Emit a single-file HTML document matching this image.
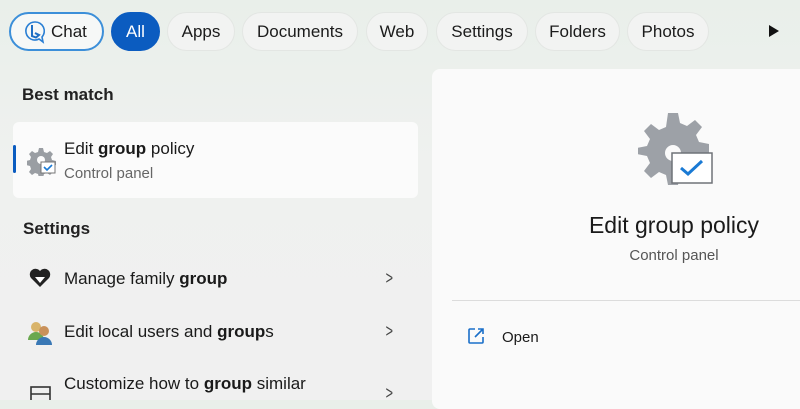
<!DOCTYPE html>
<html><head><meta charset="utf-8"><style>
*{margin:0;padding:0;box-sizing:border-box}
body{width:800px;height:400px;overflow:hidden;font-family:"Segoe UI","Liberation Sans",sans-serif;background:linear-gradient(180deg,#e9efea 0%,#eff1ef 40%,#f0f0f0 100%);position:relative;color:#1a1a1a}
.pill{position:absolute;top:12px;height:39px;border-radius:20px;background:#f2f3f2;border:1px solid #e3e6e3;font-size:17px;display:flex;align-items:center;justify-content:center;color:#1b1b1b}
.abs{position:absolute}
.chev{position:absolute;left:384px;font-size:18px;color:#444;transform:scaleX(.7)}
.t{font-size:17px}
</style></head><body>
<div class="pill" style="left:9px;width:95px;border:2.5px solid #3c8fd9;background:#f6f8f7;justify-content:flex-start;padding-left:13px">
<svg width="22" height="24" viewBox="0 0 22 24"><path d="M11 2a9 9 0 1 0 4 17l4 3-1-5A9 9 0 0 0 11 2z" fill="none" stroke="#2a7fd4" stroke-width="1.6"/><path d="M8 5v11l4 1.5 3-2.5-4-2" fill="none" stroke="#1f6fc4" stroke-width="2"/></svg>
<span style="margin-left:5px">Chat</span></div>
<div class="pill" style="left:111px;width:49px;background:#0b5cc0;border-color:#0b5cc0;color:#fff">All</div>
<div class="pill" style="left:167px;width:68px">Apps</div>
<div class="pill" style="left:242px;width:116px">Documents</div>
<div class="pill" style="left:366px;width:62px">Web</div>
<div class="pill" style="left:436px;width:92px">Settings</div>
<div class="pill" style="left:535px;width:85px">Folders</div>
<div class="pill" style="left:627px;width:82px">Photos</div>
<svg class="abs" style="left:768px;top:24px" width="12" height="14" viewBox="0 0 12 14"><path d="M1 1l10 6-10 6z" fill="#111"/></svg>

<div class="abs t" style="left:22px;top:85px;font-weight:bold;color:#222">Best match</div>
<div class="abs" style="left:13px;top:122px;width:405px;height:76px;background:#fbfbfb;border-radius:6px"></div>
<div class="abs" style="left:13px;top:145px;width:3px;height:28px;background:#0b5cc0;border-radius:2px"></div>
<svg class="abs" style="left:27px;top:146px" width="30" height="30" viewBox="0 0 30 30"><path d="M12 2h4l1 4 3 1 3-2 3 3-2 3 1 3 4 1v4l-4 1-1 3 2 3-3 3-3-2-3 1-1 4h-4l-1-4-3-1-3 2-3-3 2-3-1-3-4-1v-4l4-1 1-3-2-3 3-3 3 2 3-1z" fill="#9a9ea3"/><circle cx="14" cy="14" r="4" fill="#fbfbfb"/><rect x="14" y="16" width="14" height="11" fill="#fff" stroke="#777"/><path d="M17 21l3 3 5-5" fill="none" stroke="#1a7ad4" stroke-width="1.6"/></svg>
<div class="abs t" style="left:64px;top:139px">Edit <b>group</b> policy</div>
<div class="abs" style="left:64px;top:165px;font-size:15px;color:#666">Control panel</div>

<div class="abs t" style="left:23px;top:219px;font-weight:bold;color:#222">Settings</div>
<svg class="abs" style="left:29px;top:268px" width="22" height="20" viewBox="0 0 22 20"><path d="M11 19L2 10a5 5 0 0 1 9-7 5 5 0 0 1 9 7z" fill="#222"/><path d="M6 9h10l-5 6z" fill="#fff"/></svg>
<div class="abs t" style="left:64px;top:269px">Manage family <b>group</b></div>
<div class="chev" style="top:268px">&gt;</div>
<svg class="abs" style="left:27px;top:320px" width="28" height="26" viewBox="0 0 28 26"><circle cx="9" cy="7" r="5" fill="#d9b46a"/><path d="M1 20a8 8 0 0 1 16 0z" fill="#6aa84f"/><circle cx="17" cy="11" r="5" fill="#c9915a"/><path d="M9 25a8 8 0 0 1 16 0z" fill="#3a78b5"/></svg>
<div class="abs t" style="left:64px;top:322px">Edit local users and <b>group</b>s</div>
<div class="chev" style="top:321px">&gt;</div>
<svg class="abs" style="left:30px;top:386px" width="22" height="14"><rect x="1" y="1" width="19" height="14" fill="none" stroke="#333" stroke-width="1.6"/><path d="M1 8h19" stroke="#333" stroke-width="1.6"/></svg>
<div class="abs t" style="left:64px;top:374px">Customize how to <b>group</b> similar</div>
<div class="chev" style="top:383px">&gt;</div>

<div class="abs" style="left:432px;top:69px;width:380px;height:340px;background:#fafafa;border-radius:8px"></div>
<svg class="abs" style="left:638px;top:113px" width="78" height="72" viewBox="0 0 78 72"><path d="M30 0h10l2 10 7 3 8-6 7 7-6 8 3 7 10 2v10l-10 2-3 7 6 8-7 7-8-6-7 3-2 10H30l-2-10-7-3-8 6-7-7 6-8-3-7-10-2V35l10-2 3-7-6-8 7-7 8 6 7-3z" fill="#9da1a7"/><circle cx="35" cy="40" r="8" fill="#fafafa"/><rect x="34" y="40" width="40" height="30" fill="#fff" stroke="#6f7378" stroke-width="1.5"/><path d="M43 55l7 6 14-13" fill="none" stroke="#1a7ad4" stroke-width="3"/></svg>
<div class="abs" style="left:434px;top:212px;width:480px;text-align:center;font-size:23px;color:#1a1a1a">Edit group policy</div>
<div class="abs" style="left:434px;top:247px;width:480px;text-align:center;font-size:15px;color:#555">Control panel</div>
<div class="abs" style="left:452px;top:300px;width:348px;height:1px;background:#dcdcdc"></div>
<svg class="abs" style="left:467px;top:327px" width="18" height="18" viewBox="0 0 18 18"><path d="M8 2H3a1 1 0 0 0-1 1v12a1 1 0 0 0 1 1h12a1 1 0 0 0 1-1v-5" fill="none" stroke="#1a6fc9" stroke-width="1.6"/><path d="M11 2h5v5M16 2l-8 8" fill="none" stroke="#1a6fc9" stroke-width="1.6"/></svg>
<div class="abs" style="left:502px;top:329px;font-size:15px">Open</div>
</body></html>
